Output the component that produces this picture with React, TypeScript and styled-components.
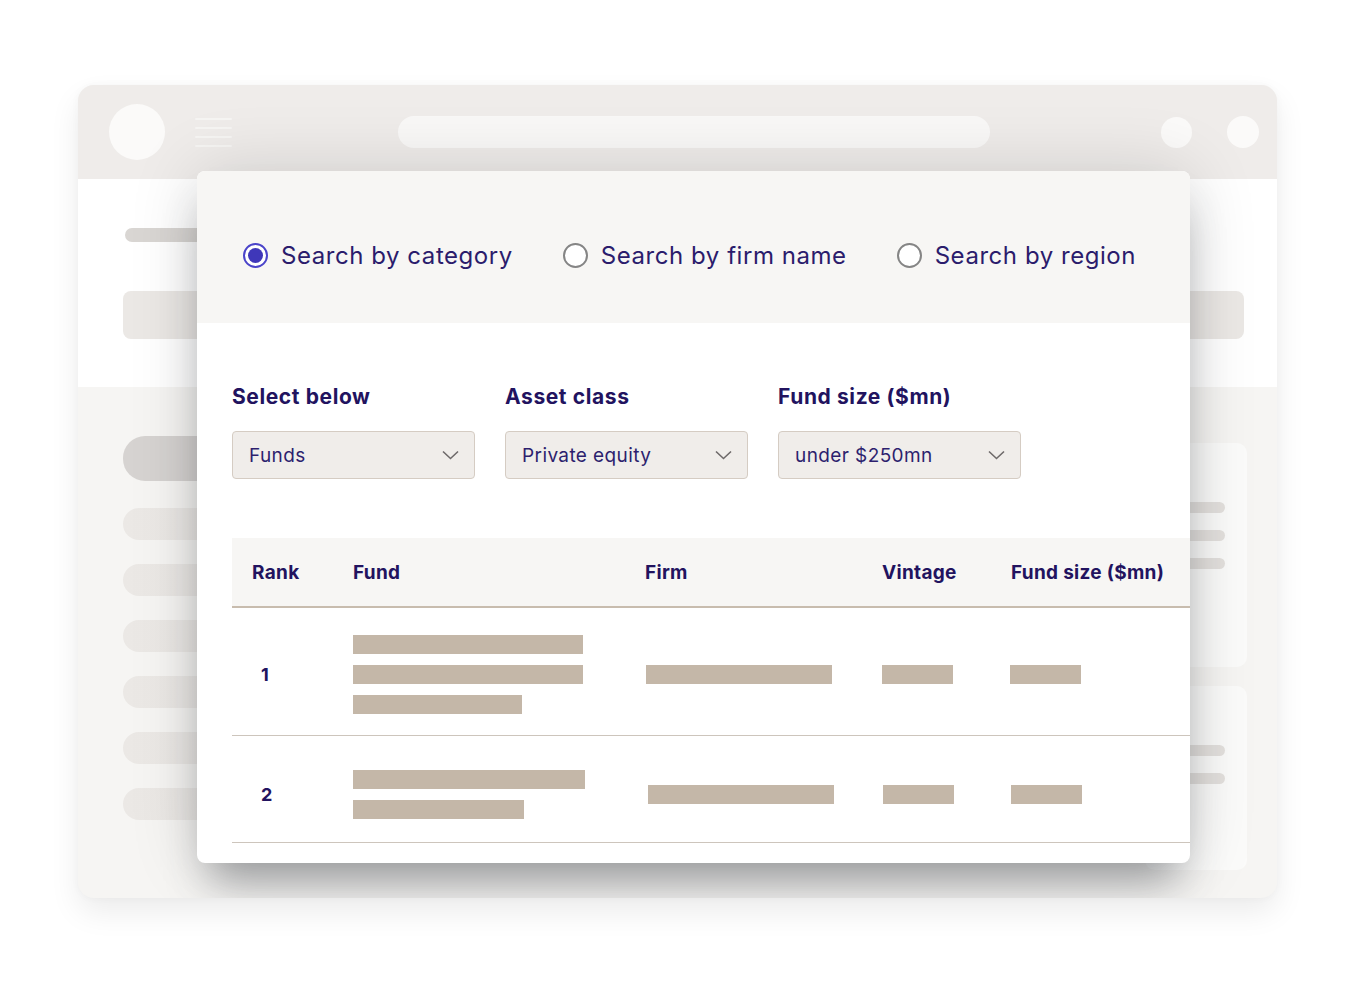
import React from 'react';
import styled, { createGlobalStyle } from 'styled-components';

const GlobalStyle = createGlobalStyle`
  html, body {
    margin: 0;
    padding: 0;
    background: #ffffff;
  }
  body {
    font-family: Inter, "Noto Sans", sans-serif;
    -webkit-font-smoothing: antialiased;
  }
`;

const INK = '#22135f';
const BAR = '#c4b7a8';

const Page = styled.div`
  width: 1360px;
  height: 992px;
  box-sizing: border-box;
  padding: 85px 0 0 78px;
  overflow: hidden;
`;

// 뒤에 깔린 흐릿한 브라우저 창
const Window = styled.div`
  position: relative;
  width: 1199px;
  height: 813px;
  border-radius: 16px;
  background: #f6f5f3;
  box-shadow: 0 14px 30px rgba(0, 0, 0, 0.08), 0 0 8px rgba(0, 0, 0, 0.03);
  overflow: hidden;
  display: flex;
  flex-direction: column;
`;

const TopBar = styled.div`
  height: 94px;
  flex: none;
  background: #efecea;
  display: flex;
  align-items: center;
  padding-left: 31px;
`;

const Dot = styled.div<{ $size: number; $ml: number }>`
  width: ${(p) => p.$size}px;
  height: ${(p) => p.$size}px;
  margin-left: ${(p) => p.$ml}px;
  border-radius: 50%;
  background: #fbfaf9;
  flex: none;
`;

const Burger = styled.div`
  margin-left: 30px;
  width: 37px;
  display: flex;
  flex-direction: column;
  gap: 7px;
  span {
    height: 2px;
    background: #f6f5f3;
    border-radius: 2px;
  }
`;

const SearchPill = styled.div`
  margin-left: 166px;
  width: 592px;
  height: 32px;
  border-radius: 16px;
  background: #f9f8f7;
`;

const Hero = styled.div`
  height: 208px;
  flex: none;
  background: #ffffff;
  box-sizing: border-box;
  padding: 49px 33px 0 45px;
`;

const ThinPill = styled.div`
  margin-left: 2px;
  width: 300px;
  height: 14px;
  border-radius: 7px;
  background: #d9d6d3;
`;

const WideBar = styled.div`
  margin-top: 49px;
  height: 48px;
  border-radius: 8px;
  background: #ebe8e5;
`;

const Lower = styled.div`
  flex: 1;
  display: flex;
  justify-content: space-between;
  padding: 49px 30px 0 45px;
`;

const Sidebar = styled.div`
  width: 240px;
  display: flex;
  flex-direction: column;
  gap: 24px;
`;

const SideItem = styled.div<{ $active?: boolean }>`
  height: ${(p) => (p.$active ? 45 : 32)}px;
  margin-bottom: ${(p) => (p.$active ? 3 : 0)}px;
  border-radius: 22px;
  background: ${(p) => (p.$active ? '#d6d3d1' : 'linear-gradient(90deg, #ebe8e5, #eeece9)')};
`;

const SideCol = styled.div`
  width: 102px;
  padding-top: 7px;
  display: flex;
  flex-direction: column;
  gap: 19px;
`;

const SideCard = styled.div<{ $h: number }>`
  height: ${(p) => p.$h}px;
  box-sizing: border-box;
  border-radius: 10px;
  background: #fbfbfa;
  padding: 59px 22px 0 0;
  display: flex;
  flex-direction: column;
  gap: 17px;
`;

const CardLine = styled.div`
  height: 11px;
  border-radius: 6px;
  background: #e4e1de;
`;

// 앞에 떠 있는 검색 카드
const Card = styled.div`
  position: absolute;
  left: 119px;
  top: 86px;
  width: 993px;
  height: 692px;
  border-radius: 8px;
  background: #ffffff;
  overflow: hidden;
  box-shadow: 0 30px 40px -12px rgba(60, 65, 70, 0.45), 0 0 70px rgba(0, 0, 0, 0.14);
  display: flex;
  flex-direction: column;
`;

const CardHead = styled.div`
  height: 152px;
  flex: none;
  box-sizing: border-box;
  background: #f7f6f4;
  padding: 16px 0 0 46px;
  display: flex;
  align-items: center;
  gap: 50px;
`;

const RadioLabel = styled.label`
  display: flex;
  align-items: center;
  gap: 13px;
  font-size: 24px;
  letter-spacing: 0.55px;
  color: #2b1c6c;
  cursor: pointer;
`;

const RadioMark = styled.span<{ $on?: boolean }>`
  width: 25px;
  height: 25px;
  box-sizing: border-box;
  border-radius: 50%;
  border: 2px solid ${(p) => (p.$on ? '#4b44c9' : '#858585')};
  background: #ffffff;
  display: flex;
  align-items: center;
  justify-content: center;
  &::after {
    content: '';
    width: 15px;
    height: 15px;
    border-radius: 50%;
    background: ${(p) => (p.$on ? '#3f37b9' : 'transparent')};
  }
`;

const CardBody = styled.div`
  flex: 1;
  padding: 62px 0 0 35px;
`;

const Filters = styled.div`
  display: flex;
  gap: 30px;
`;

const Filter = styled.div`
  width: 243px;
  display: flex;
  flex-direction: column;
  gap: 22px;
`;

const FilterLabel = styled.div`
  font-size: 21px;
  line-height: 24px;
  font-weight: 700;
  letter-spacing: 0.6px;
  color: ${INK};
`;

const Select = styled.div`
  height: 48px;
  box-sizing: border-box;
  border: 1.5px solid #d5ccc3;
  border-radius: 4px;
  background: #f0edea;
  display: flex;
  align-items: center;
  justify-content: space-between;
  padding: 0 15px 0 16px;
  font-size: 19px;
  letter-spacing: 0.4px;
  color: #2d1f6e;
`;

const Table = styled.div`
  margin-top: 59px;
`;

const cols = '121px 292px 237px 129px 1fr';

const HeadRow = styled.div`
  display: grid;
  grid-template-columns: ${cols};
  height: 68px;
  align-items: center;
  background: #f7f6f4;
  border-bottom: 2.5px solid #c8bcae;
  font-size: 19px;
  font-weight: 700;
  letter-spacing: 0.3px;
  color: ${INK};
  & > div:first-child {
    padding-left: 20px;
  }
`;

const Row = styled.div<{ $pt: number; $pb: number }>`
  display: grid;
  grid-template-columns: ${cols};
  align-items: center;
  padding: ${(p) => p.$pt}px 0 ${(p) => p.$pb}px;
  border-bottom: 1.5px solid #cdc5bc;
`;

const Rank = styled.div`
  padding-left: 29px;
  font-size: 18px;
  font-weight: 700;
  color: ${INK};
`;

const Stack = styled.div`
  display: flex;
  flex-direction: column;
  gap: 11px;
`;

const Bar = styled.div<{ $w: number; $ml?: number }>`
  width: ${(p) => p.$w}px;
  height: 19px;
  margin-left: ${(p) => p.$ml || 0}px;
  background: ${BAR};
`;

const Chevron = () => (
  <svg width="17" height="10" viewBox="0 0 17 10" fill="none">
    <path d="M1 1.5 L8.5 8.5 L16 1.5" stroke="#6e6a6a" strokeWidth="1.6" />
  </svg>
);

const radios = [
  { label: 'Search by category', on: true },
  { label: 'Search by firm name' },
  { label: 'Search by region' },
];

const filters = [
  { label: 'Select below', value: 'Funds' },
  { label: 'Asset class', value: 'Private equity' },
  { label: 'Fund size ($mn)', value: 'under $250mn' },
];

const rows = [
  { rank: 1, fund: [230, 230, 169], firm: [186, 1], vintage: [71, 0], size: [71, -1], pt: 27, pb: 21 },
  { rank: 2, fund: [232, 171], firm: [186, 3], vintage: [71, 1], size: [71, 0], pt: 34, pb: 23 },
];

export default function App() {
  return (
    <Page>
      <GlobalStyle />
      <Window>
        <TopBar>
          <Dot $size={56} $ml={0} />
          <Burger>
            <span />
            <span />
            <span />
            <span />
          </Burger>
          <SearchPill />
          <Dot $size={31} $ml={171} />
          <Dot $size={32} $ml={35} />
        </TopBar>
        <Hero>
          <ThinPill />
          <WideBar />
        </Hero>
        <Lower>
          <Sidebar>
            <SideItem $active />
            {[0, 1, 2, 3, 4, 5].map((i) => (
              <SideItem key={i} />
            ))}
          </Sidebar>
          <SideCol>
            <SideCard $h={224}>
              <CardLine />
              <CardLine />
              <CardLine />
            </SideCard>
            <SideCard $h={184}>
              <CardLine />
              <CardLine />
            </SideCard>
          </SideCol>
        </Lower>

        <Card>
          <CardHead>
            {radios.map((r) => (
              <RadioLabel key={r.label}>
                <RadioMark $on={r.on} />
                {r.label}
              </RadioLabel>
            ))}
          </CardHead>
          <CardBody>
            <Filters>
              {filters.map((f) => (
                <Filter key={f.label}>
                  <FilterLabel>{f.label}</FilterLabel>
                  <Select>
                    {f.value}
                    <Chevron />
                  </Select>
                </Filter>
              ))}
            </Filters>
            <Table>
              <HeadRow>
                <div>Rank</div>
                <div>Fund</div>
                <div>Firm</div>
                <div>Vintage</div>
                <div>Fund size ($mn)</div>
              </HeadRow>
              {rows.map((r) => (
                <Row key={r.rank} $pt={r.pt} $pb={r.pb}>
                  <Rank>{r.rank}</Rank>
                  <Stack>
                    {r.fund.map((w, i) => (
                      <Bar key={i} $w={w} />
                    ))}
                  </Stack>
                  <Bar $w={r.firm[0]} $ml={r.firm[1]} />
                  <Bar $w={r.vintage[0]} $ml={r.vintage[1]} />
                  <Bar $w={r.size[0]} $ml={r.size[1]} />
                </Row>
              ))}
            </Table>
          </CardBody>
        </Card>
      </Window>
    </Page>
  );
}
